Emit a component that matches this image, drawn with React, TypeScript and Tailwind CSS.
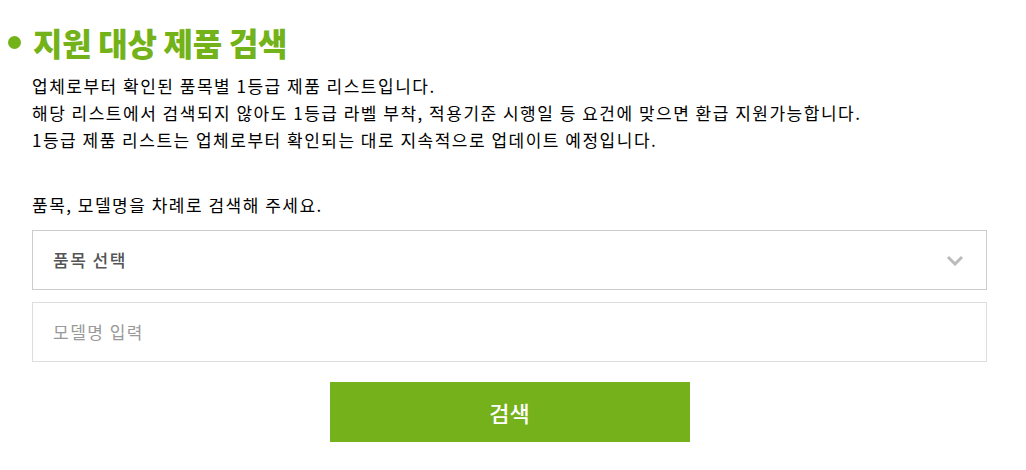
import React from "react";

export default function App() {
  const font = { fontFamily: '"Noto Sans CJK KR", "Noto Sans", sans-serif' };
  return (
    <div className="w-[1026px] h-[470px] bg-white text-black" style={font}>
      <div className="pt-[22px] pl-[8px] flex items-center gap-[12px]">
        <span className="w-[13px] h-[13px] rounded-full bg-[#74b21a] inline-block" />
        <h1 className="text-[32px] font-black leading-[40px] text-[#74b21a] tracking-[-0.3px]">지원 대상 제품 검색</h1>
      </div>
      <div className="pl-[32px] pr-[39px]">
        <div className="mt-[10px] text-[17px] leading-[27px] text-black tracking-[1.5px] font-normal">
          <p>업체로부터 확인된 품목별 1등급 제품 리스트입니다.</p>
          <p>해당 리스트에서 검색되지 않아도 1등급 라벨 부착, 적용기준 시행일 등 요건에 맞으면 환급 지원가능합니다.</p>
          <p>1등급 제품 리스트는 업체로부터 확인되는 대로 지속적으로 업데이트 예정입니다.</p>
        </div>
        <p className="mt-[38px] text-[17px] leading-[27px] text-black tracking-[1.5px] font-normal">품목, 모델명을 차례로 검색해 주세요.</p>
        <div className="mt-[12px] h-[60px] border border-[#cccccc] flex items-center justify-between pl-[20px] pr-[22px]">
          <span className="text-[17px] text-[#555] tracking-[1.5px] font-medium">품목 선택</span>
          <svg width="18" height="11" viewBox="0 0 18 11" fill="none">
            <path d="M2 2l7 7 7-7" stroke="#bbbbbb" strokeWidth="3" />
          </svg>
        </div>
        <div className="mt-[12px] h-[60px] border border-[#dddddd] flex items-center pl-[20px]">
          <span className="text-[17px] text-[#999] tracking-[1.5px]">모델명 입력</span>
        </div>
        <div className="mt-[20px] flex justify-center">
          <button className="w-[360px] h-[60px] bg-[#74b11a] text-white text-[22px] font-medium">검색</button>
        </div>
      </div>
    </div>
  );
}
